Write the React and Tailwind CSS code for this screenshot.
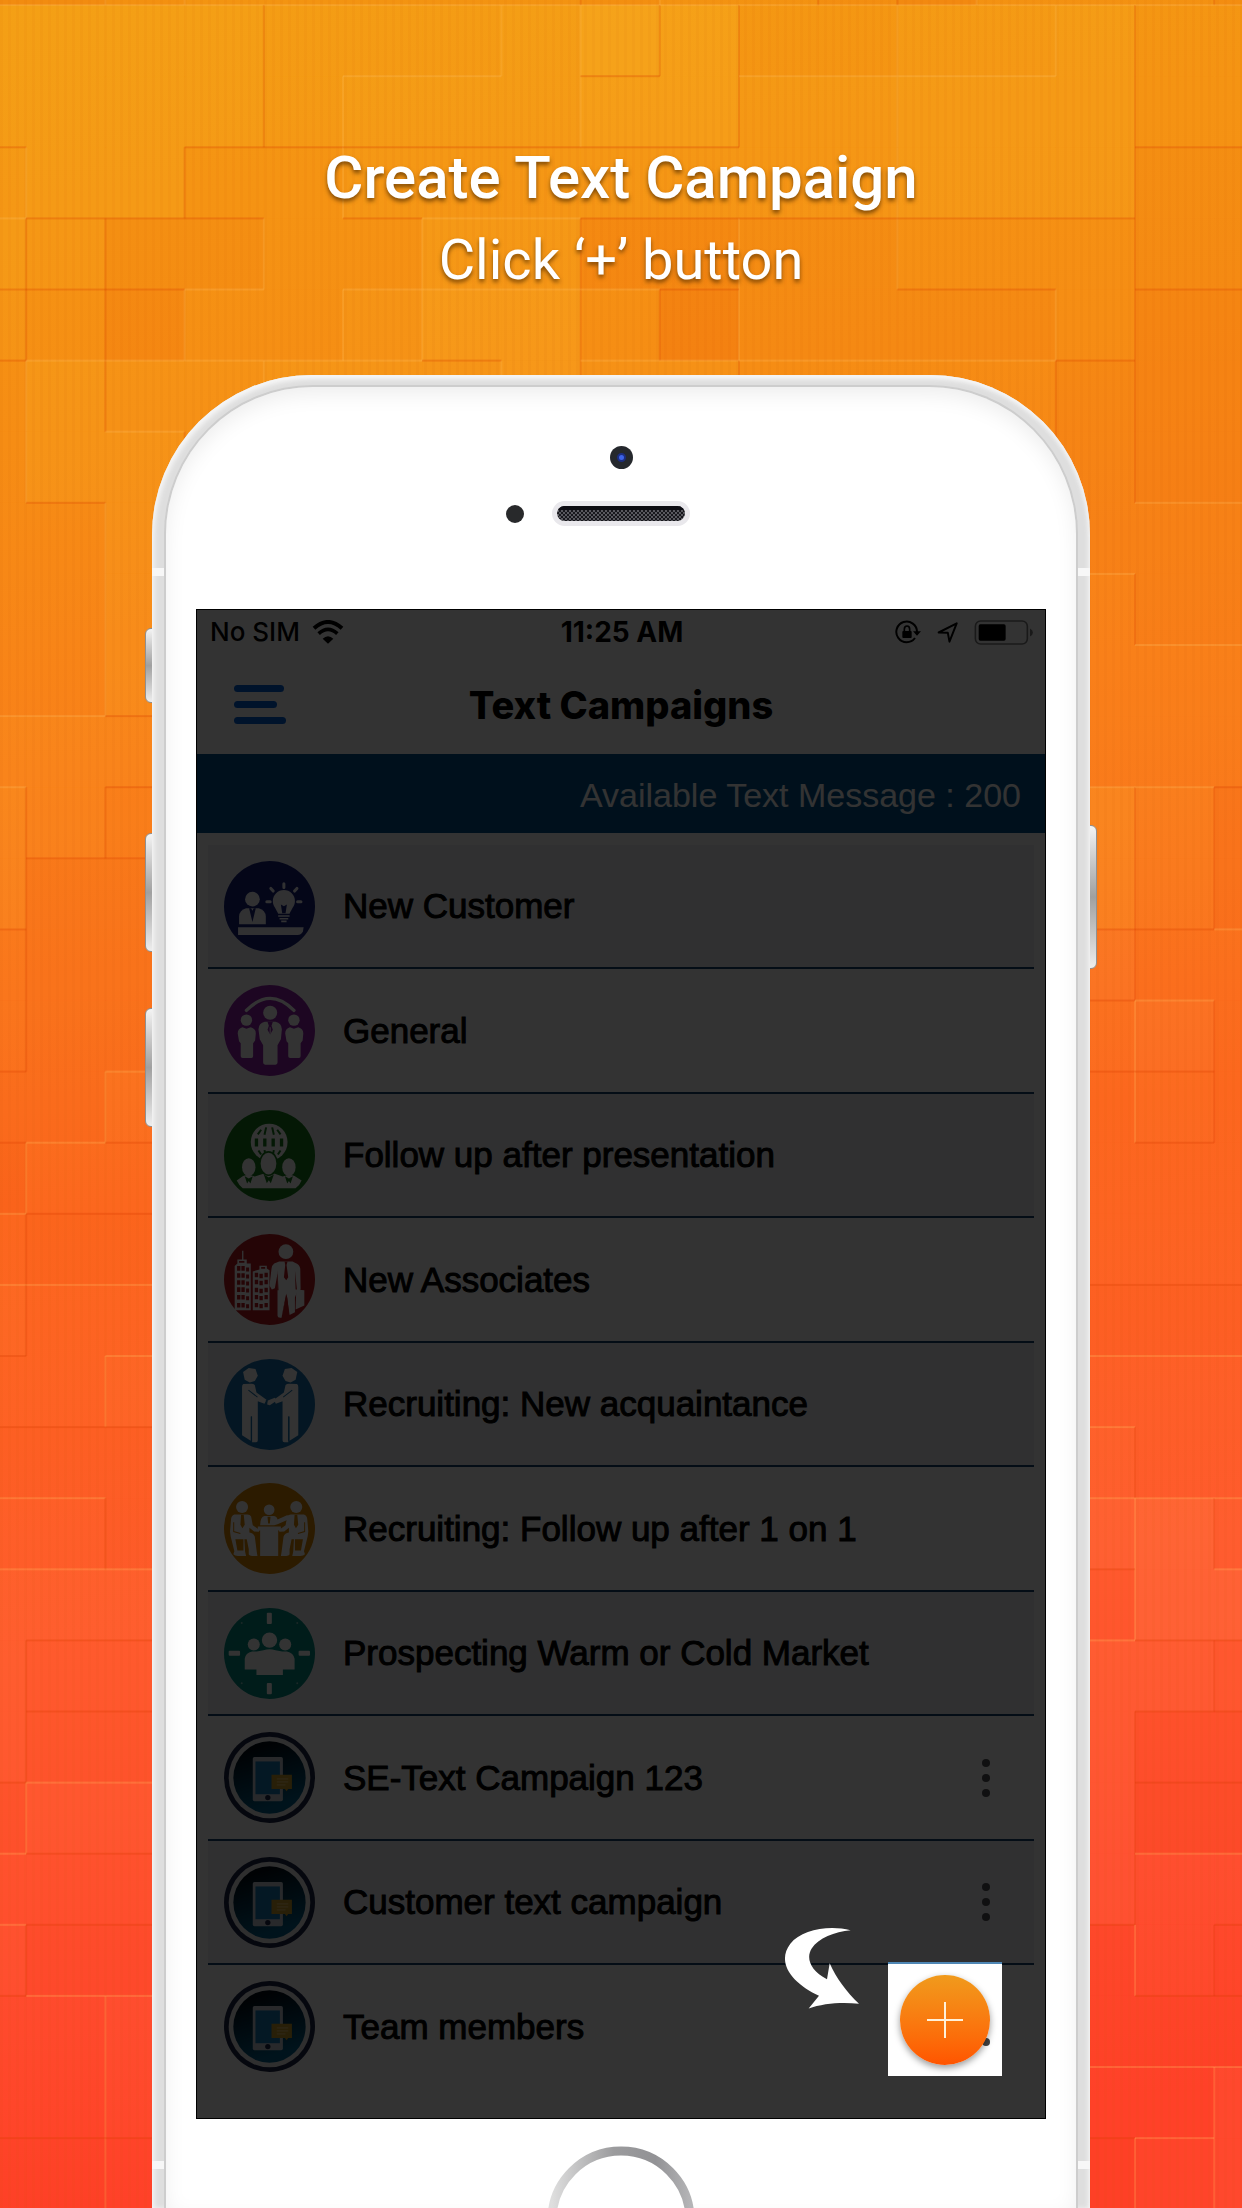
import React from "react";

const TILE_ROWS = [
  "11233333233213332",
  "66665556874455644",
  "66665666775566644",
  "56644555555566633",
  "65334466223344433",
  "54244577413333422",
  "46556667554444322",
  "46655555444444322",
  "44655555444444333",
  "44655555444444433",
  "44644444444444444",
  "55544444444444444",
  "65444444444444753",
  "63344444444444753",
  "43344444444444644",
  "43344444444444564",
  "33544444444444454",
  "24444444444444444",
  "43344444444444444",
  "54444444444444333",
  "44555544444444444",
  "33344444444444544",
  "44333444444444675",
  "55544444444444477",
  "54466555555555665",
  "53355555555555633",
  "35566666666666622",
  "44455555555555655",
  "53355555555555354",
  "44555555555555333",
  "44533444444444446",
  "33455555555555356",
];

function tileFill(level, row) {
  if (level < 5) return "#ee3200";
  return row < 14 ? "#ffd440" : "#ffa468";
}

function Backdrop() {
  return (
    <svg
      aria-hidden="true"
      className="absolute inset-0 h-full w-full"
      viewBox="0 0 1242 2208"
      preserveAspectRatio="none"
    >
      <defs>
        <linearGradient id="sky" x1="0" y1="0" x2="0.06" y2="1">
          <stop offset="0" stopColor="#f49d13" />
          <stop offset="0.2" stopColor="#f69015" />
          <stop offset="0.35" stopColor="#f9831a" />
          <stop offset="0.45" stopColor="#fa781d" />
          <stop offset="0.55" stopColor="#fc691f" />
          <stop offset="0.65" stopColor="#fe6326" />
          <stop offset="0.75" stopColor="#ff5c2f" />
          <stop offset="0.9" stopColor="#ff4c2f" />
          <stop offset="1" stopColor="#ff4229" />
        </linearGradient>
        <pattern id="weave" width="8" height="8" patternUnits="userSpaceOnUse">
          <rect width="3" height="8" fill="#c84600" opacity="0.05" />
        </pattern>
      </defs>
      <rect width="1242" height="2208" fill="url(#sky)" />
      {TILE_ROWS.map((row, r) =>
        row.split("").map((ch, c) => {
          const level = Number(ch);
          const x = -53 + c * 79.2;
          const y = -66 + r * 71.1;
          const left = c > 0 ? Number(row[c - 1]) : level;
          const above = r > 0 ? Number(TILE_ROWS[r - 1][c]) : level;
          return (
            <g key={r + "-" + c}>
              <rect
                x={x}
                y={y}
                width="79.2"
                height="71.1"
                fill={tileFill(level, r)}
                opacity={Math.abs(level - 4.5) * 0.045}
              />
              {left !== level && (
                <rect x={x - 1} y={y} width="2" height="71.1" fill={level > left ? "#ffc060" : "#d83c00"} opacity="0.22" />
              )}
              {above !== level && (
                <rect x={x} y={y - 1} width="79.2" height="2" fill={level > above ? "#ffc060" : "#d83c00"} opacity="0.28" />
              )}
            </g>
          );
        })
      )}
      <rect width="1242" height="2208" fill="url(#weave)" />
    </svg>
  );
}

function Disc({ color, children }) {
  return (
    <svg aria-hidden="true" viewBox="0 0 272 272" className="size-[91px] shrink-0">
      <circle cx="136" cy="136" r="136" fill={color} />
      {children}
    </svg>
  );
}

function CustomerIcon() {
  const c = "#15207a";
  return (
    <Disc color={c}>
      <g fill="#f2f2fa">
        <circle cx="85" cy="114" r="22" />
        <path d="M45 189V166Q46 146 66 141H104Q124 146 125 166V189Z" />
        <path d="M42 198H238L236 210Q232 221 220 221H42Z" />
        <path d="M179 87a33 33 0 0 1 33 33c0 14-10 22-16 38h-34c-6-16-16-24-16-38a33 33 0 0 1 33-33Z" />
        <path d="M162 162h34v5h-34zM166 170h26v5h-26zM171 178h16v5h-16z" />
      </g>
      <path d="M75 141h6l4 8 4-8h6L85 182Z" fill={c} />
      <path d="M170 130l9 5 9-5-4 26h-10Z" fill={c} />
      <g stroke="#f2f2fa" strokeWidth="9" strokeLinecap="round">
        <path d="M179 68v11M140 82l7 8M218 82l-7 8M128 122h10M220 122h10" />
      </g>
    </Disc>
  );
}

function GeneralIcon() {
  const c = "#9022a8";
  const side = "M55 126Q41 130 41 145L45 168L50 174V213Q50 218 56 218H82Q87 218 87 212V174L93 166L95 145Q95 130 80 126L67 131Z";
  return (
    <Disc color={c}>
      <path d="M67 76Q138 4 209 76" fill="none" stroke="#fff" strokeWidth="10" strokeLinecap="round" />
      <g fill="#fff">
        <circle cx="138" cy="83" r="21" />
        <circle cx="67" cy="105" r="17" />
        <circle cx="209" cy="105" r="17" />
        <path d={side} />
        <path d={side} transform="translate(142 0)" />
        <path d="M122 110Q104 114 103 132L107 162L117 180V232Q117 238 123 238H154Q160 238 160 232V180L170 162L173 132Q172 114 154 110Z" />
      </g>
      <path d="M130 110h16l-4 12 4 12-8 14-8-14 4-12Z" fill={c} />
      <path d="M138 126v20" stroke="#fff" strokeWidth="3" />
    </Disc>
  );
}

function PresentationIcon() {
  const c = "#157a1b";
  return (
    <Disc color={c}>
      <circle cx="135" cy="96" r="55" fill="#fff" />
      <g fill="none" stroke={c} strokeWidth="10">
        <path d="M97 85v24M122 85v24M147 85v24M172 85v24" />
        <path d="M101 73l10-14M121 74l5-22M149 74l-5-22M169 73l-10-14" strokeWidth="6" />
        <path d="M103 121l8 12M121 120l3 14M149 120l-3 14M169 121l-8 12" strokeWidth="6" />
      </g>
      <g fill="#fff">
        <path d="M38 211L57 197Q75 190 92 199L120 190H150L175 199Q195 190 211 197L232 211Q226 226 214 234H56Q45 226 38 211Z" />
        <ellipse cx="74" cy="171" rx="20" ry="27" />
        <ellipse cx="194" cy="171" rx="20" ry="27" />
        <ellipse cx="133" cy="160" rx="26" ry="35" stroke={c} strokeWidth="5" />
      </g>
      <path d="M62 198l7 22 5-8 5 8 7-22-12 7ZM182 198l7 22 5-8 5 8 7-22-12 7ZM119 193l9 26 6-9 6 9 9-26-15 9Z" fill={c} />
    </Disc>
  );
}

function AssociatesIcon() {
  const c = "#b81d22";
  return (
    <Disc color={c}>
      <g fill="#fff">
        <path d="M54 50h4v26h10v12h12v140H32V96l8-8V76h14Z" />
        <path d="M86 112l20-6v-11h22v8l8 5v120H86Z" />
        <circle cx="185" cy="53" r="22" />
        <path d="M165 82L150 88Q144 92 142 104L136 154L143 166L152 162L160 118V244Q160 250 168 250H172L187 178L196 242L212 234V190L219 172L229 166L228 104Q226 90 212 86L205 82Z" />
        <path d="M216 166l24 2v46l-26 12Z" />
      </g>
      <g fill={c}>
        <path d="M45 81h16v5H45zM111 99h12v5h-12z" />
        {[96, 117, 138, 159, 182, 206].map((y) => (
          <path key={y} d={`M39 ${y}h10v14h-10zM52 ${y}h10v14h-10zM66 ${y + 4}h9v12h-9z`} />
        ))}
        {[116, 137, 161, 182, 206].map((y) => (
          <path key={y} d={`M92 ${y}h10v13h-10zM106 ${y + 3}h10v13h-10zM121 ${y}h10v13h-10z`} />
        ))}
        <path d="M181 82h9l-3 11 5 36-6 9-7-9 4-36Z" />
        <path d="M160 108l3 60-4 0ZM212 108l6 58h-4Z" />
        <path d="M185 182l4 8 6 54-8-2-4-40-11 47Z" />
      </g>
    </Disc>
  );
}

function HandshakeIcon() {
  const c = "#1870ad";
  const man = "M58 75Q54 76 54 84V228L80 244V172H84V249H96Q101 249 101 243V126L121 134L127 122L97 100L92 78Q88 74 82 74Z";
  return (
    <Disc color={c}>
      <g fill="#fff">
        <path d="M57 39L74 27L94 30L101 50L92 66L77 70L62 62Z" />
        <path d="M219 39L202 27L182 30L175 50L184 66L199 70L214 62Z" />
        <path d={man} />
        <path d={man} transform="translate(276 0) scale(-1 1)" />
      </g>
      <g fill="none" stroke={c} strokeWidth="3">
        <path d="M73 93L100 114M204 93L177 114M126 122l4 14" />
        <path d="M82 172v72M193 172v72" />
      </g>
      <path d="M131 124L152 116L158 124L137 138L129 136Z" fill="#fff" />
    </Disc>
  );
}

function MeetingIcon() {
  const c = "#dc8600";
  const man = "M31 94Q21 98 21 110L18 145L20 160L31 204L28 213Q32 218 42 218H66L63 205L61 168L68 168L74 198V214Q76 218 84 218H100L98 206L92 160Q88 150 76 148V134L90 145L104 146L107 141L86 126L81 100Q78 94 70 94Z";
  return (
    <Disc color={c}>
      <g fill="#fff">
        <circle cx="54" cy="72" r="18" />
        <circle cx="216" cy="72" r="18" />
        <circle cx="135" cy="80" r="16" />
        <path d={man} />
        <path d={man} transform="translate(270 0) scale(-1 1)" />
        <path d="M108 126Q109 100 121 99H148Q158 100 160 109L190 96L194 108L160 123L150 126Z" />
        <path d="M101 130H170V141H162V218H108V141H101Z" />
      </g>
      <g fill={c}>
        <path d="M51 95h8l3 30-7 10-6-10ZM211 95h8l3 30-7 10-6-10ZM130 101h9l-2 20h-5Z" />
        <path d="M34 168h24v34H40ZM212 168h24l-6 34H212Z" />
      </g>
      <path d="M29 117v28l20 6M241 117v28l-20 6" fill="none" stroke={c} strokeWidth="3" />
    </Disc>
  );
}

function ProspectIcon() {
  return (
    <Disc color="#008a80">
      <g fill="#fff">
        <rect x="128" y="14" width="15" height="34" rx="3" />
        <rect x="128" y="224" width="15" height="34" rx="3" />
        <rect x="14" y="128" width="34" height="15" rx="3" />
        <rect x="223" y="128" width="34" height="15" rx="3" />
        <circle cx="136" cy="96" r="23" />
        <circle cx="89" cy="109" r="18" />
        <circle cx="183" cy="109" r="18" />
        <path d="M62 184V152Q64 134 84 130H98L118 126Q136 120 154 126L174 130H188Q208 134 211 152V184H176V200H97V184Z" />
        <circle cx="53" cy="45" r="3" opacity=".5" />
        <circle cx="219" cy="45" r="3" opacity=".5" />
        <circle cx="53" cy="225" r="3" opacity=".5" />
        <circle cx="219" cy="225" r="3" opacity=".5" />
      </g>
    </Disc>
  );
}

function TextCampaignIcon() {
  return (
    <Disc color="#1d2545">
      <defs>
        <linearGradient id="dial" x1="0.3" y1="0" x2="0.6" y2="1">
          <stop offset="0.1" stopColor="#020d18" />
          <stop offset="0.9" stopColor="#04618c" />
        </linearGradient>
      </defs>
      <circle cx="136" cy="136" r="122" fill="#e8e8ea" />
      <circle cx="136" cy="136" r="108" fill="url(#dial)" />
      <rect x="86" y="75" width="90" height="132" rx="5" fill="#c8ced8" />
      <rect x="94" y="88" width="73" height="98" fill="#1478b4" />
      <circle cx="131" cy="196" r="8" fill="#1d2545" />
      <path d="M142 128h61v42h-11l-5 7-5-7h-40Z" fill="#c89b28" />
      <path d="M158 140h34M158 149h34M158 158h26" stroke="#dfc06c" strokeWidth="4" />
    </Disc>
  );
}

const CAMPAIGNS = [
  { name: "New Customer", Icon: CustomerIcon },
  { name: "General", Icon: GeneralIcon },
  { name: "Follow up after presentation", Icon: PresentationIcon },
  { name: "New Associates", Icon: AssociatesIcon },
  { name: "Recruiting: New acquaintance", Icon: HandshakeIcon },
  { name: "Recruiting: Follow up after 1 on 1", Icon: MeetingIcon },
  { name: "Prospecting Warm or Cold Market", Icon: ProspectIcon },
  { name: "SE-Text Campaign 123", Icon: TextCampaignIcon, menu: true },
  { name: "Customer text campaign", Icon: TextCampaignIcon, menu: true },
  { name: "Team members", Icon: TextCampaignIcon },
];

function StatusBar() {
  return (
    <div className="grid h-[46px] grid-cols-[1fr_auto_1fr] items-center pr-3 pl-[14px] font-[Inter,sans-serif] text-black">
      <div className="flex items-center gap-3">
        <span className="text-[26px] leading-8 font-medium">No SIM</span>
        <svg aria-hidden="true" viewBox="0 0 96 70" className="h-6 w-8">
          <path d="M6 24Q48-14 90 24" fill="none" stroke="#000" strokeWidth="12" />
          <path d="M20 40Q48 14 76 40" fill="none" stroke="#000" strokeWidth="11" />
          <path d="M32 55Q48 40 64 55L48 70Z" />
        </svg>
      </div>
      <span className="text-[28px] leading-8 font-bold">11:25 AM</span>
      <div className="flex items-center justify-end">
        <svg aria-hidden="true" viewBox="0 0 78 72" className="mr-4 h-6 w-[26px]">
          <path d="M60 54A31 31 0 1 1 66 36" fill="none" stroke="#000" strokeWidth="6" />
          <path d="M54 34h24L66 47Z" />
          <rect x="22" y="33" width="28" height="21" rx="3" />
          <path d="M28 34v-6q0-10 8-10t8 10v6" fill="none" stroke="#000" strokeWidth="5" />
        </svg>
        <svg aria-hidden="true" viewBox="0 0 64 64" className="mr-4 size-[21px]">
          <path d="M5 32L60 4L38 60L33 33Z" fill="none" stroke="#000" strokeWidth="6" strokeLinejoin="round" />
        </svg>
        <svg aria-hidden="true" viewBox="0 0 180 76" className="h-[25px] w-[60px]">
          <rect x="3" y="3" width="158" height="70" rx="16" fill="none" stroke="#000" strokeOpacity=".5" strokeWidth="5" />
          <rect x="13" y="13" width="82" height="50" rx="5" />
          <path d="M169 26q9 4 9 12t-9 12Z" opacity=".5" />
        </svg>
      </div>
    </div>
  );
}

function NavBar() {
  return (
    <header className="grid h-[99px] grid-cols-[1fr_auto_1fr] items-center">
      <button type="button" aria-label="Open menu" className="ml-[38px] flex w-[52px] flex-col gap-[9px]">
        <span className="h-[7px] w-[50px] rounded-full bg-[#0060d8]" />
        <span className="h-[7px] w-[43px] rounded-full bg-[#0060d8]" />
        <span className="h-[7px] w-[52px] rounded-full bg-[#0060d8]" />
      </button>
      <h2 className="font-[Inter,sans-serif] text-[38px] leading-[44px] font-extrabold text-black">Text Campaigns</h2>
    </header>
  );
}

function CampaignRow({ name, Icon, menu }) {
  return (
    <li className="flex h-[124px] items-center border-b-2 border-[#144070] bg-white pl-4 last:border-transparent odd:bg-[#f1f1f5] last:bg-white even:h-[125px]">
      <Icon />
      <span className="ml-7 flex-1 text-[35px] leading-10 text-black [-webkit-text-stroke:1px_black]">{name}</span>
      {menu && (
        <button type="button" aria-label={"Options for " + name} className="mr-11 flex flex-col gap-[7px]">
          <span className="size-2 rounded-full bg-[#505054]" />
          <span className="size-2 rounded-full bg-[#505054]" />
          <span className="size-2 rounded-full bg-[#505054]" />
        </button>
      )}
    </li>
  );
}

function AppScreen() {
  return (
    <main className="relative mx-[30px] bg-white font-['Liberation_Sans',sans-serif]">
      <StatusBar />
      <NavBar />
      <p className="h-[79px] bg-[#00518c] pr-[25px] text-right text-[34px] leading-[82px] text-white">
        Available Text Message : 200
      </p>
      <ul className="mx-3 mt-3 mb-[29px]">
        {CAMPAIGNS.map((item) => (
          <CampaignRow key={item.name} {...item} />
        ))}
      </ul>
      <div className="pointer-events-none absolute inset-0 border border-black bg-black/80" />
      <svg aria-hidden="true" viewBox="133 142 225 245" className="absolute right-[187px] bottom-[110px] h-[82px] w-[75px]">
        <path
          fill="#fff"
          d="M333 151C265 135 185 150 152 192C108 250 160 312 238 348L207 386C250 370 310 366 358 372C320 335 290 295 270 250L262 298C212 272 198 235 216 206C236 174 285 156 333 151Z"
        />
      </svg>
      <div className="absolute right-11 bottom-[43px] flex size-[114px] items-center justify-center border-t-2 border-[#4f87b5] bg-white">
        <span className="absolute right-3 bottom-[30px] size-2 rounded-full bg-[#444]" />
        <button
          type="button"
          aria-label="Create text campaign"
          className="relative flex size-[90px] items-center justify-center rounded-full bg-linear-to-b from-[#f09a1c] to-[#ff5400] shadow-[0_3px_7px_rgba(0,0,0,0.4)]"
        >
          <svg aria-hidden="true" viewBox="0 0 36 36" className="size-9">
            <path d="M18 0V36M0 18H36" stroke="#fff0d8" strokeWidth="2" />
          </svg>
        </button>
      </div>
    </main>
  );
}

function SideKey({ className }) {
  return (
    <span
      className={
        "absolute w-[8px] border border-[#909090] bg-linear-to-b from-[#f4f4f4] via-[#a0a0a0] to-[#eeeeee] " + className
      }
    />
  );
}

function Phone() {
  return (
    <div className="relative flex flex-1 flex-col">
      <SideKey className="top-[253px] -left-[7px] h-[75px] rounded-l-md" />
      <SideKey className="top-[458px] -left-[7px] h-[119px] rounded-l-md" />
      <SideKey className="top-[633px] -left-[7px] h-[119px] rounded-l-md" />
      <SideKey className="top-[450px] -right-[7px] h-[144px] rounded-r-md" />
      <div className="relative flex flex-1 flex-col rounded-t-[160px] bg-[#dedede] px-3 pt-[10px] shadow-[inset_2px_4px_5px_#f6f6f6,inset_-2px_0_4px_#f2f2f2]">
        <span className="absolute inset-x-0 top-[193px] h-2 bg-[#f7f7f7]" />
        <span className="absolute inset-x-0 bottom-[39px] h-2 bg-[#f7f7f7]" />
        <div className="relative flex flex-1 flex-col rounded-t-[149px] border-2 border-b-0 border-[#cdcdcd] bg-white shadow-[inset_0_8px_22px_-2px_#ececec]">
          <div className="flex h-[222px] flex-col items-center pt-[59px]">
            <span className="flex size-[23px] items-center justify-center rounded-full bg-[#25282d]">
              <span className="size-[9px] rounded-full border-2 border-[#1c2d80] bg-[#3d63e8]" />
            </span>
            <div className="mt-8 grid w-full grid-cols-[1fr_auto_1fr] items-center">
              <span className="mr-[28px] size-[18px] justify-self-end rounded-full bg-[#28292b]" />
              <span className="rounded-full border-[5px] border-[#e9e8ec]">
                <svg aria-hidden="true" className="block h-[15px] w-[128px] rounded-full">
                  <defs>
                    <pattern id="mesh" width="4" height="4" patternUnits="userSpaceOnUse">
                      <rect width="4" height="4" fill="#17171c" />
                      <circle cx="1" cy="1" r="0.9" fill="#77777e" />
                      <circle cx="3" cy="3" r="0.9" fill="#77777e" />
                    </pattern>
                  </defs>
                  <rect width="128" height="15" fill="url(#mesh)" />
                  <rect width="128" height="4" fill="#0c0c12" />
                </svg>
              </span>
            </div>
          </div>
          <AppScreen />
          <div className="flex min-h-[89px] flex-1 basis-0 flex-col items-center overflow-hidden pt-[27px]">
            <button type="button" aria-label="Home" className="h-[62px] w-[148px] overflow-hidden">
              <svg aria-hidden="true" viewBox="0 0 148 148" className="size-[148px]">
                <defs>
                  <linearGradient id="ring" x1="0" y1="0" x2="1" y2="0">
                    <stop offset="0" stopColor="#dedede" />
                    <stop offset="0.45" stopColor="#9b9b9d" />
                    <stop offset="0.75" stopColor="#929295" />
                    <stop offset="1" stopColor="#b4b4b6" />
                  </linearGradient>
                </defs>
                <circle cx="74" cy="74" r="69" fill="#fff" stroke="url(#ring)" strokeWidth="9" />
              </svg>
            </button>
          </div>
        </div>
      </div>
    </div>
  );
}

export default function App() {
  return (
    <div className="relative flex min-h-screen flex-col overflow-hidden bg-[#f88018]">
      <Backdrop />
      <div className="relative flex flex-1 flex-col px-38 pt-[142px]">
        <div className="h-[233px] text-center font-[Roboto,sans-serif] text-white [text-shadow:0_3px_4px_rgba(90,50,0,0.75)]">
          <h1 className="text-[60px] leading-[72px] font-medium">Create Text Campaign</h1>
          <p className="mt-2 text-[56px] leading-[76px]">Click ‘+’ button</p>
        </div>
        <Phone />
      </div>
    </div>
  );
}
